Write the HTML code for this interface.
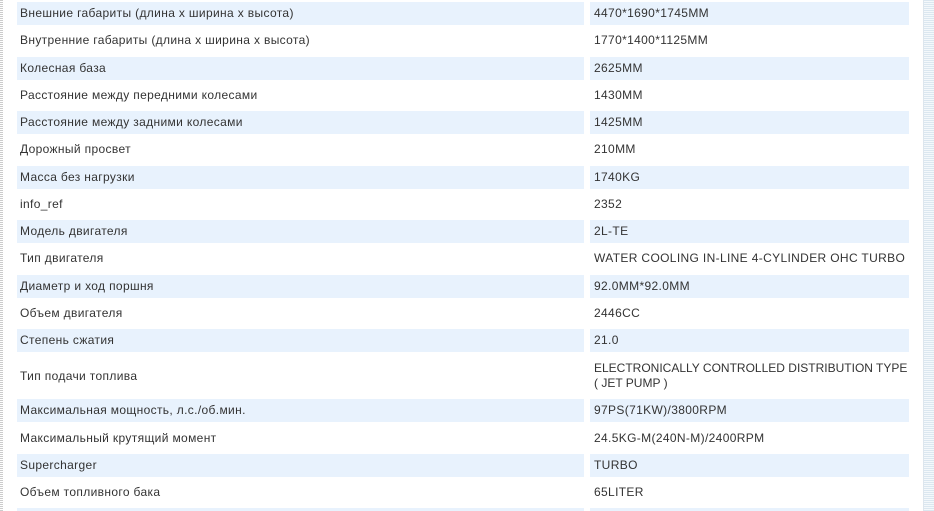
<!DOCTYPE html>
<html><head><meta charset="utf-8"><style>
html,body{margin:0;width:934px;height:511px;overflow:hidden}
body{background:#fff;position:relative;font-family:"Liberation Sans","DejaVu Sans",sans-serif;font-size:12px;letter-spacing:0.35px;color:#333}
.c{position:absolute;display:flex;align-items:center;box-sizing:border-box;padding-left:3px;line-height:15px;white-space:nowrap}
.s{background:#e8f2fd}
.l{left:17px;width:567px}
.r{left:590px;width:319px;padding-left:4px}
#lb{position:absolute;left:0;top:0;width:3px;height:511px;background:repeating-linear-gradient(#ccc 0 1px,#fff 1px 2px)}
#rb{position:absolute;left:923px;top:0;width:11px;height:511px;border-left:1px solid #dde6ee;background:repeating-linear-gradient(#dbe7f0 0 1px,#f4f8fb 1px 2px)}
</style></head><body>
<div id="lb"></div><div id="rb"></div>
<div id="t"></div>
<script>
var rows=[["Внешние габариты (длина х ширина х высота)","4470*1690*1745MM"],["Внутренние габариты (длина х ширина х высота)","1770*1400*1125MM"],["Колесная база","2625MM"],["Расстояние между передними колесами","1430MM"],["Расстояние между задними колесами","1425MM"],["Дорожный просвет","210MM"],["Масса без нагрузки","1740KG"],["info_ref","2352"],["Модель двигателя","2L-TE"],["Тип двигателя","WATER COOLING IN-LINE 4-CYLINDER OHC TURBO"],["Диаметр и ход поршня","92.0MM*92.0MM"],["Объем двигателя","2446CC"],["Степень сжатия","21.0"],["Тип подачи топлива","ELECTRONICALLY CONTROLLED DISTRIBUTION TYPE<br>( JET PUMP )"],["Максимальная мощность, л.с./об.мин.","97PS(71KW)/3800RPM"],["Максимальный крутящий момент","24.5KG-M(240N-M)/2400RPM"],["Supercharger","TURBO"],["Объем топливного бака","65LITER"],["",""]];
var h="",y=2;
rows.forEach(function(r,i){var ht=i==13?40:23;var s=i%2==0?" s":"";var st=i==13?';letter-spacing:0;display:block;padding-top:5px':'';
h+='<div class="c l'+s+'" style="top:'+Math.round(y)+'px;height:'+ht+'px">'+r[0]+'</div>';
h+='<div class="c r'+s+'" style="top:'+Math.round(y)+'px;height:'+ht+'px'+st+'">'+r[1]+'</div>';
y+= (i==13?43:27.25);});
document.getElementById("t").innerHTML=h;
</script>
</body></html>
